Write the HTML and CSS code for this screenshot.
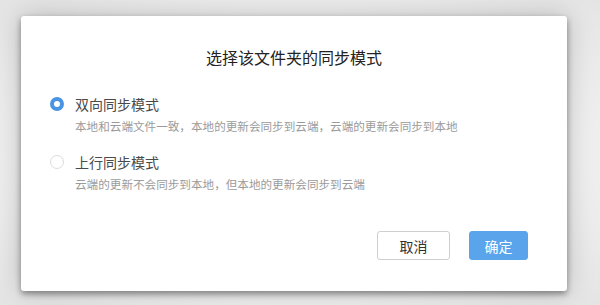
FILE: index.html
```html
<!DOCTYPE html>
<html lang="zh-CN">
<head>
<meta charset="utf-8">
<title>选择该文件夹的同步模式</title>
<link rel="stylesheet" href="styles.css">
</head>
<body>
<div class="stage">
  <div class="dialog">
    <h1 class="title">选择该文件夹的同步模式</h1>
    <div class="options">
      <div class="option">
        <div class="option-row">
          <span class="radio radio-checked"></span>
          <span class="label">双向同步模式</span>
        </div>
        <div class="desc">本地和云端文件一致，本地的更新会同步到云端，云端的更新会同步到本地</div>
      </div>
      <div class="option option-second">
        <div class="option-row">
          <span class="radio"></span>
          <span class="label">上行同步模式</span>
        </div>
        <div class="desc">云端的更新不会同步到本地，但本地的更新会同步到云端</div>
      </div>
    </div>
    <div class="actions">
      <button class="btn btn-cancel">取消</button>
      <button class="btn btn-ok">确定</button>
    </div>
  </div>
</div>
</body>
</html>
```

FILE: styles.css
```css
html, body {
  margin: 0;
  padding: 0;
}
body {
  width: 600px;
  height: 305px;
  overflow: hidden;
  background: radial-gradient(ellipse at 50% 50%, #f2f2f2 60%, #e4e4e4 100%);
  font-family: "Noto Sans CJK SC", "Noto Sans", sans-serif;
}
.stage {
  padding: 16px 0 0 21px;
}
.dialog {
  width: 546px;
  height: 275px;
  box-sizing: border-box;
  background: #ffffff;
  border-radius: 3px;
  box-shadow: 0 3px 6px rgba(0, 0, 0, 0.4), 0 0 28px rgba(0, 0, 0, 0.22);
  padding: 29px 39px 0 29px;
  display: flex;
  flex-direction: column;
}
.title {
  margin: 0;
  font-size: 16px;
  font-weight: 400;
  line-height: 24px;
  height: 24px;
  text-align: center;
  color: #222222;
  padding-left: 10px;
}
.options {
  margin-top: 25px;
  display: flex;
  flex-direction: column;
}
.option-second {
  margin-top: 18px;
}
.option-row {
  display: flex;
  align-items: center;
  height: 20px;
}
.radio {
  width: 14px;
  height: 14px;
  box-sizing: border-box;
  border-radius: 50%;
  border: 1px solid #dcdcdc;
  background: #fff;
  flex: none;
}
.radio-checked {
  border: 4px solid #4a94e4;
}
.label {
  margin-left: 11px;
  font-size: 14px;
  line-height: 20px;
  color: #4a4a4a;
}
.desc {
  margin-top: 4px;
  margin-left: 25px;
  font-size: 11.6px;
  line-height: 16px;
  color: #9b9b9b;
  white-space: nowrap;
}
.actions {
  margin-top: 39px;
  display: flex;
  justify-content: flex-end;
  gap: 19px;
}
.btn {
  height: 29px;
  box-sizing: border-box;
  border-radius: 3px;
  font-family: "Noto Sans CJK SC", "Noto Sans", sans-serif;
  font-size: 14px;
  padding: 0;
  cursor: pointer;
}
.btn-cancel {
  width: 73px;
  background: #ffffff;
  border: 1px solid #cfcfcf;
  color: #333333;
}
.btn-ok {
  width: 59px;
  background: #5aa4ec;
  border: 1px solid #5aa4ec;
  color: #ffffff;
}
```
